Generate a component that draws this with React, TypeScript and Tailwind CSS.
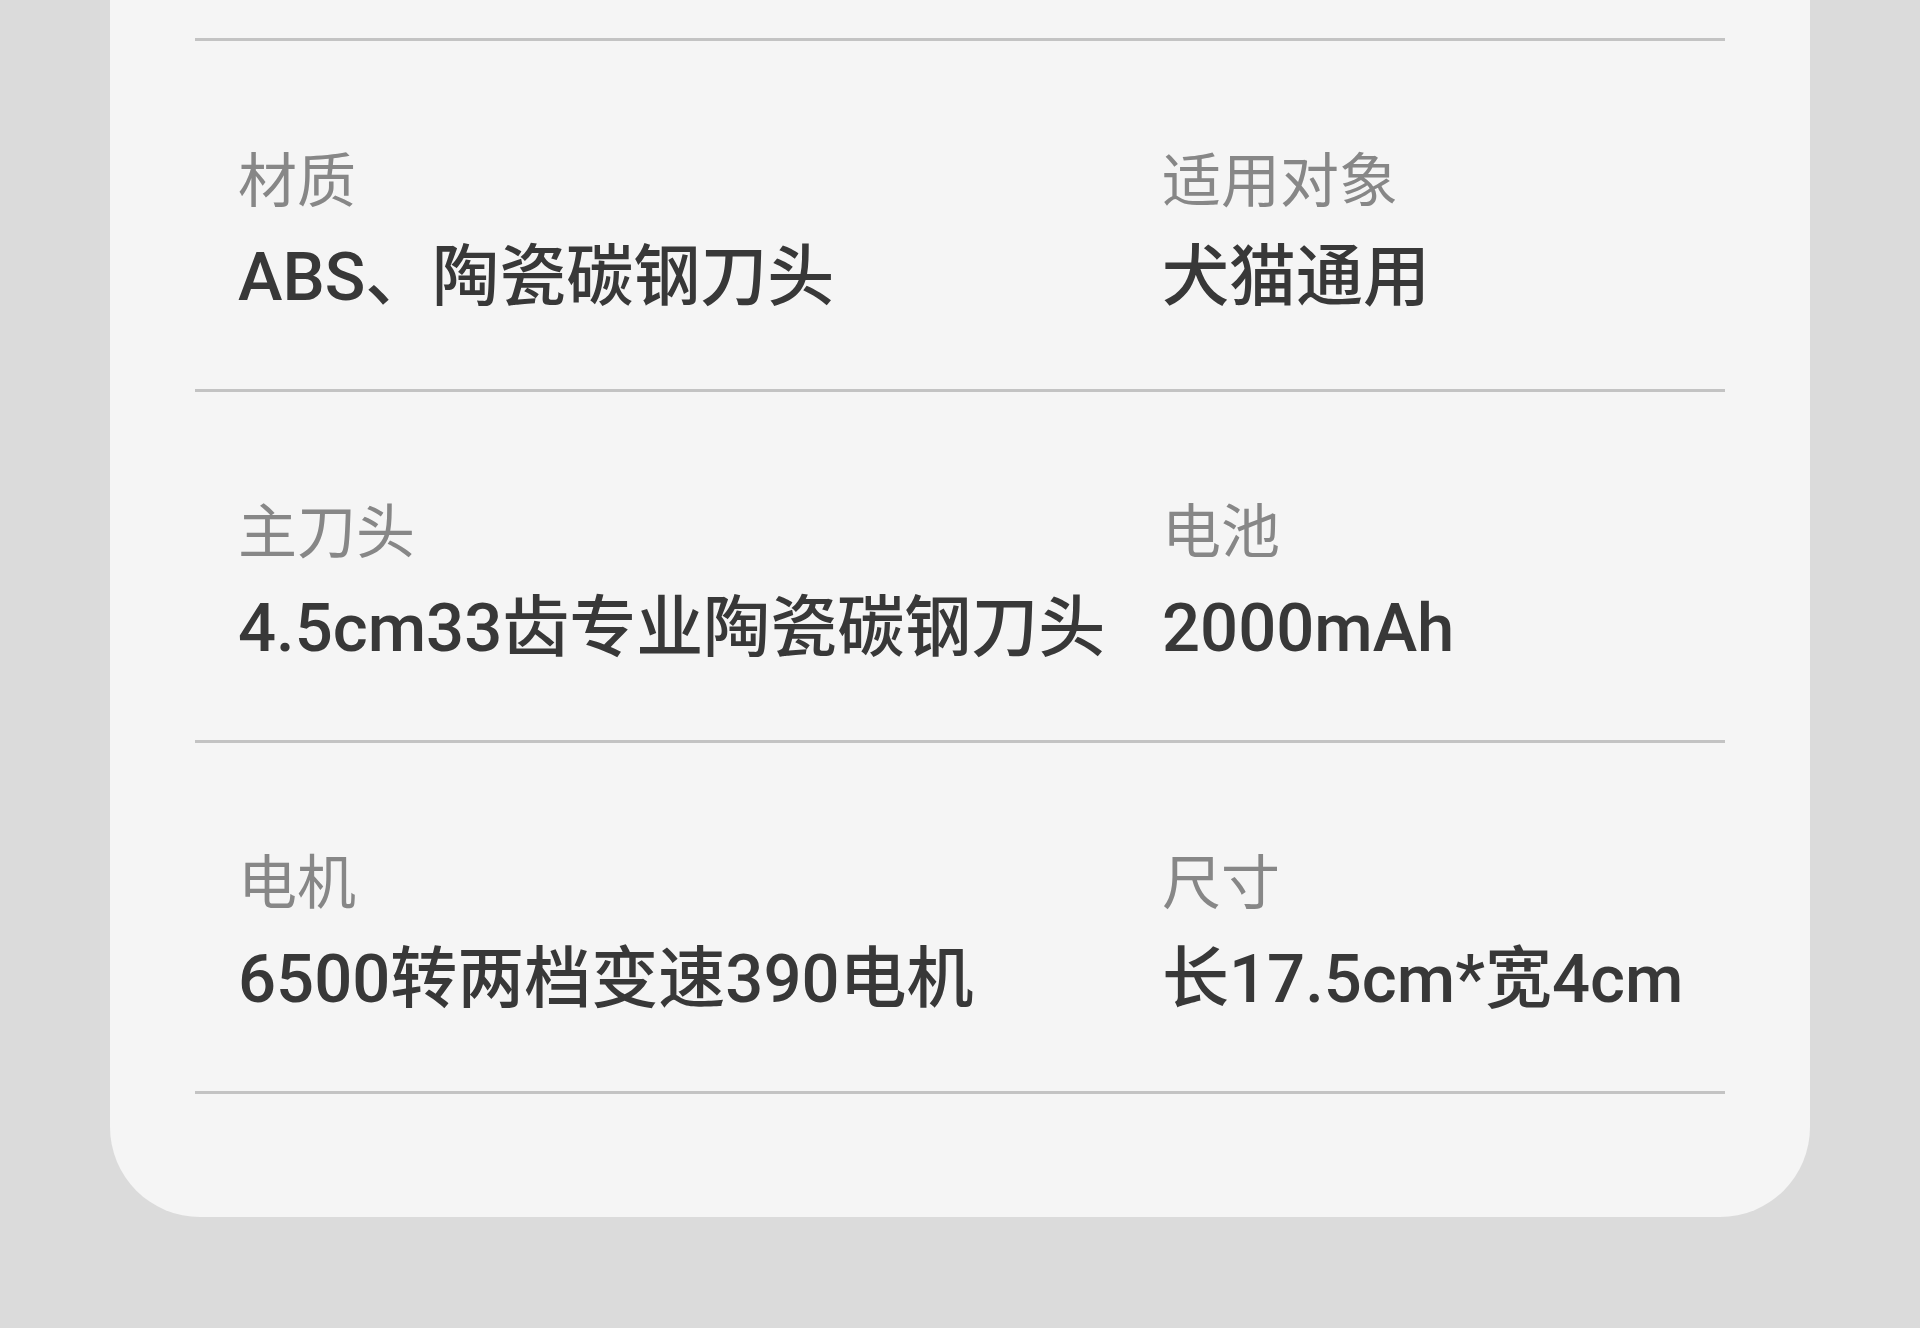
import React from "react";

const rows: [string, string, string, string][] = [
  ["材质", "ABS、陶瓷碳钢刀头", "适用对象", "犬猫通用"],
  ["主刀头", "4.5cm33齿专业陶瓷碳钢刀头", "电池", "2000mAh"],
  ["电机", "6500转两档变速390电机", "尺寸", "长17.5cm*宽4cm"],
];

function Cell({ label, value }: { label: string; value: string }) {
  return (
    <div className="flex flex-col">
      <div className="text-[59px] leading-[60px] text-[#878787] whitespace-nowrap">{label}</div>
      <div className="mt-[30px] text-[67px] leading-[70px] font-medium text-[#383838] whitespace-nowrap">{value}</div>
    </div>
  );
}

export default function App() {
  return (
    <div
      className="w-[1920px] h-[1328px] overflow-hidden bg-[#dbdbdb]"
      style={{ fontFamily: 'Roboto, "Noto Sans CJK SC", sans-serif' }}
    >
      <div className="ml-[110px] w-[1700px] h-[1217px] bg-[#f5f5f5] rounded-b-[90px] px-[85px] pt-[38px]">
        <div className="h-[3px] bg-[#c3c3c3]" />
        {rows.map((r, i) => (
          <div key={i}>
            <div className="h-[348px] pt-[111px] px-[43px] grid grid-cols-[924px_1fr]">
              <Cell label={r[0]} value={r[1]} />
              <Cell label={r[2]} value={r[3]} />
            </div>
            <div className="h-[3px] bg-[#c3c3c3]" />
          </div>
        ))}
      </div>
    </div>
  );
}
